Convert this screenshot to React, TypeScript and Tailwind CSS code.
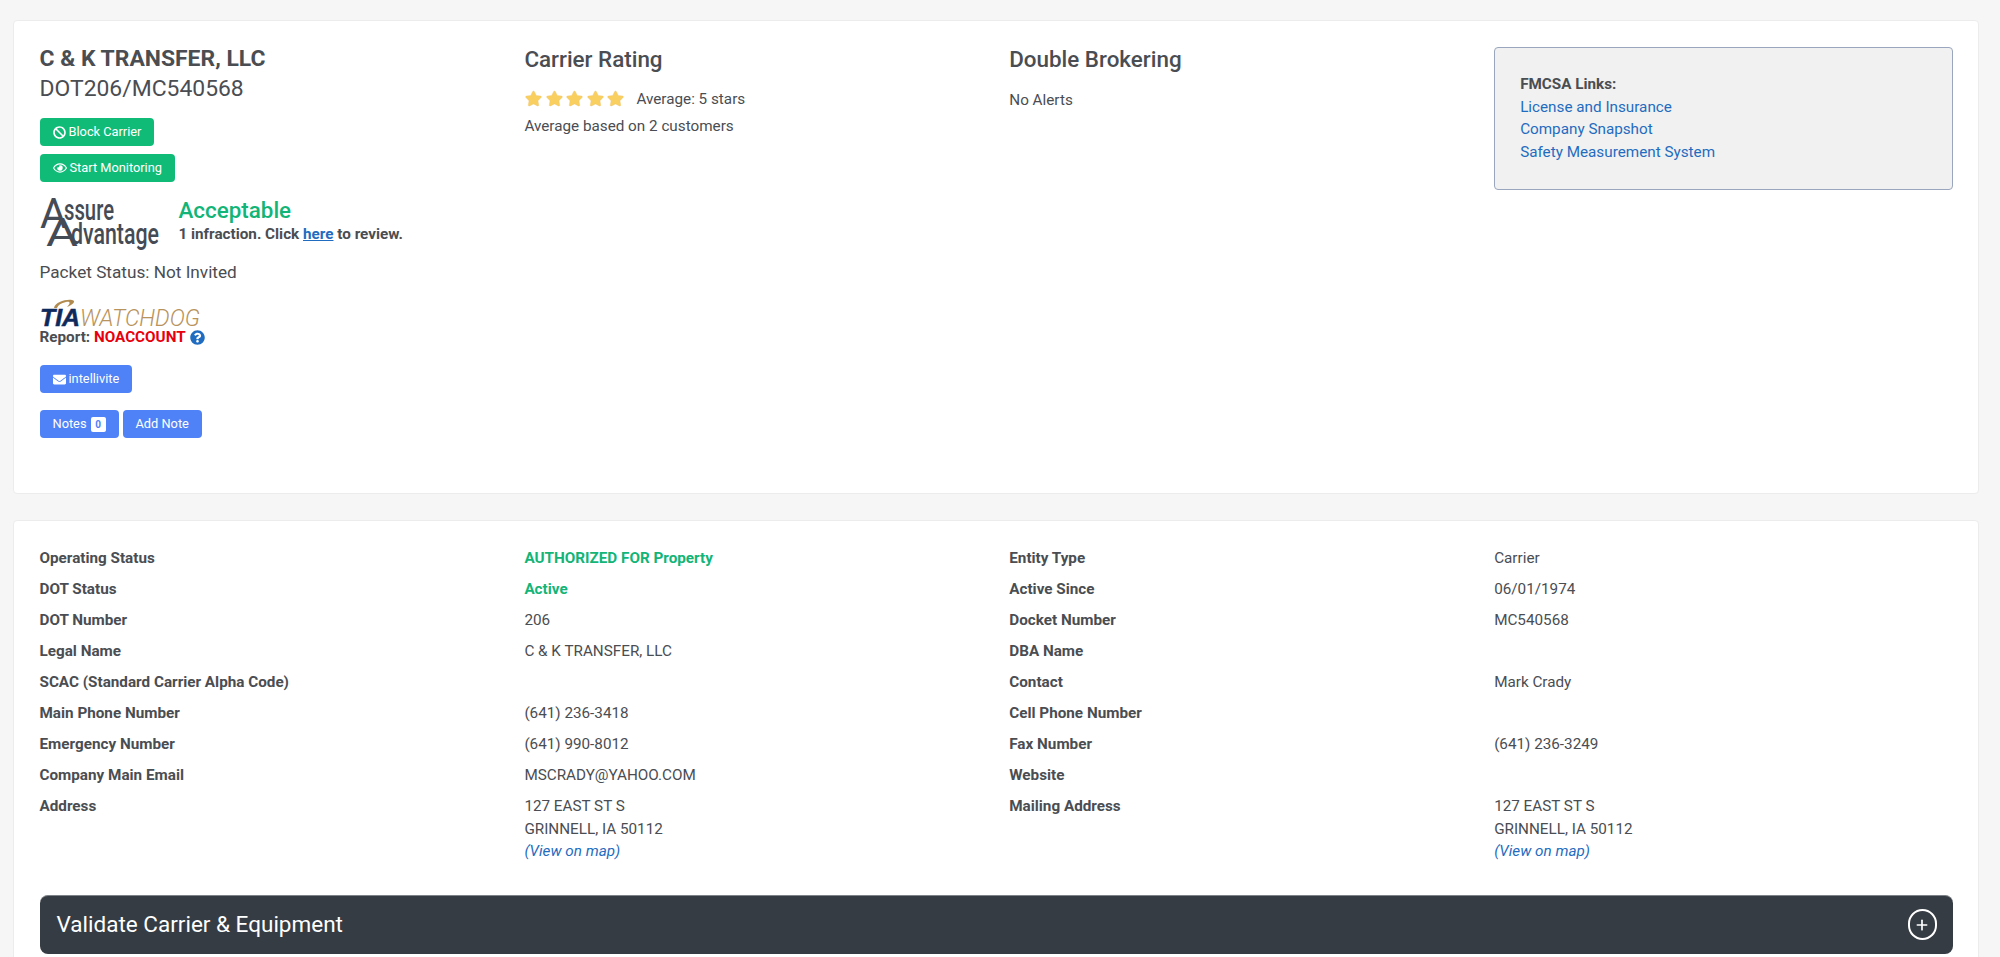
import { FaBan, FaEnvelope, FaQuestionCircle, FaRegEye, FaStar } from "react-icons/fa";
import { Plus } from "lucide-react";

const rows = [
  ["Operating Status", "AUTHORIZED FOR Property", "Entity Type", "Carrier"],
  ["DOT Status", "Active", "Active Since", "06/01/1974"],
  ["DOT Number", "206", "Docket Number", "MC540568"],
  ["Legal Name", "C & K TRANSFER, LLC", "DBA Name", ""],
  ["SCAC (Standard Carrier Alpha Code)", "", "Contact", "Mark Crady"],
  ["Main Phone Number", "(641) 236-3418", "Cell Phone Number", ""],
  ["Emergency Number", "(641) 990-8012", "Fax Number", "(641) 236-3249"],
  ["Company Main Email", "MSCRADY@YAHOO.COM", "Website", ""],
];

function Address() {
  return (
    <div className="leading-[22.5px]">
      <div>127 EAST ST S</div>
      <div>GRINNELL, IA 50112</div>
      <a className="italic text-[#1f6cc0]">(View on map)</a>
    </div>
  );
}

// logo lettering is real text, squeezed to the condensed shape of the original
function AssureLogo() {
  return (
    <svg width="120" height="52" viewBox="0 0 120 52" className="shrink-0 -mb-[4px] overflow-visible">
      <g fill="#454b55" fontFamily="Roboto, sans-serif">
        <text x="0" y="31" fontSize="42" fontWeight="400" textLength="27" lengthAdjust="spacingAndGlyphs">A</text>
        <text x="6" y="49" fontSize="38" fontWeight="400" textLength="32" lengthAdjust="spacingAndGlyphs">A</text>
        <text x="24" y="23" fontSize="30" fontWeight="500" textLength="50" lengthAdjust="spacingAndGlyphs">ssure</text>
        <text x="31" y="47" fontSize="30" fontWeight="500" textLength="88" lengthAdjust="spacingAndGlyphs">dvantage</text>
      </g>
    </svg>
  );
}

function TiaLogo() {
  return (
    <svg width="162" height="32" viewBox="0 0 162 32" className="block -mb-[4px]">
      <path d="M14 9 C15 3 26 0 32 1 C37 2 32 6 27 8 C31 4 30 2 26 3 C21 4 18 6 17 9 Z" fill="#b08a4e" />
      <text x="0" y="26.5" fontFamily="Liberation Sans, sans-serif" fontSize="23" fontWeight="700" fontStyle="italic" fill="#0e2a5c" stroke="#0e2a5c" strokeWidth="0.5" textLength="40" lengthAdjust="spacingAndGlyphs">TIA</text>
      <text x="40" y="26.5" fontFamily="Roboto, sans-serif" fontSize="23" fontWeight="300" fontStyle="italic" fill="#b8935c" textLength="120" lengthAdjust="spacingAndGlyphs">WATCHDOG</text>
    </svg>
  );
}

function Btn({ color, className = "", children }: { color: string; className?: string; children: React.ReactNode }) {
  return (
    <button className={`inline-flex items-center h-[28px] px-[13px] rounded-[4px] text-[12.8px] text-white ${color} ${className}`}>
      {children}
    </button>
  );
}

export default function App() {
  return (
    <div className="h-[957px] overflow-hidden bg-[#f6f6f6] pt-[20px] px-[13px] font-['Roboto',sans-serif] text-[15.25px] leading-[22.5px] text-[#4a4d52]">
      <div className="w-[1966px] h-[474px] bg-white border border-[#ececec] rounded-[4px] pt-[23px] px-[25.5px]">
        <div className="grid grid-cols-4 gap-x-[26.5px]">
          <div>
            <h1 className="text-[22.9px] leading-[30px] font-bold">C &amp; K TRANSFER, LLC</h1>
            <div className="text-[22.9px] leading-[30px]">DOT206/MC540568</div>
            <div className="mt-[14px] flex flex-col items-start gap-[8px]">
              <Btn color="bg-[#10bb78]"><FaBan className="mr-[3px] text-[13px]" />Block Carrier</Btn>
              <Btn color="bg-[#10bb78]"><FaRegEye className="mr-[3px] text-[14px]" />Start Monitoring</Btn>
            </div>
            <div className="mt-[15px] flex items-start">
              <AssureLogo />
              <div className="ml-[19px]">
                <div className="text-[22.4px] leading-[27px] font-medium text-[#12b577]">Acceptable</div>
                <div className="leading-[20px] font-bold">
                  1 infraction. Click <a className="underline text-[#1f6cc0]">here</a> to review.
                </div>
              </div>
            </div>
            <div className="mt-[14px] text-[17.2px] leading-[26px]">Packet Status: Not Invited</div>
            <div className="mt-[14px]"><TiaLogo /></div>
            <div className="flex items-center leading-[20px] font-bold">
              Report:&nbsp;<span className="text-[#e8000f]">NOACCOUNT</span>
              <FaQuestionCircle className="ml-[4px] text-[15px] text-[#1f6cc0]" />
            </div>
            <div className="mt-[18px]">
              <Btn color="bg-[#4f82f7]"><FaEnvelope className="mr-[3px] text-[13px]" />intellivite</Btn>
            </div>
            <div className="mt-[17px] flex gap-[4px]">
              <Btn color="bg-[#4f82f7]">
                Notes
                <span className="ml-[4px] w-[15px] h-[15px] rounded-[2px] bg-white text-[#4f82f7] text-[10px] font-bold leading-[15px] text-center">0</span>
              </Btn>
              <Btn color="bg-[#4f82f7]">Add Note</Btn>
            </div>
          </div>
          <div>
            <h2 className="text-[22.4px] leading-[30px] font-medium">Carrier Rating</h2>
            <div className="mt-[15px] flex items-center h-[20px]">
              <div className="ml-[1px] mb-[2px] flex gap-[3.5px]">
                {[0, 1, 2, 3, 4].map((i) => (
                  <FaStar key={i} className="w-[17px] h-[17px] text-[#f9cf60] stroke-[#e9bd72] stroke-[10px]" />
                ))}
              </div>
              <span className="ml-[12px]">Average: 5 stars</span>
            </div>
            <div className="mt-[6px]">Average based on 2 customers</div>
          </div>
          <div>
            <h2 className="text-[22.4px] leading-[30px] font-medium">Double Brokering</h2>
            <div className="mt-[15px]">No Alerts</div>
          </div>
          <div className="mt-[3px] h-[143px] bg-[#f1f1f1] border border-[#9aa6bd] rounded-[4px] pt-[25px] px-[25px]">
            <div className="font-bold">FMCSA Links:</div>
            <a className="block text-[#1f6cc0]">License and Insurance</a>
            <a className="block text-[#1f6cc0]">Company Snapshot</a>
            <a className="block text-[#1f6cc0]">Safety Measurement System</a>
          </div>
        </div>
      </div>

      <div className="mt-[26px] w-[1966px] h-[480px] bg-white border border-[#ececec] rounded-[4px] pt-[26px] px-[25.5px]">
        <div className="grid grid-cols-4 gap-x-[26.5px]">
          {rows.map((r) => (
            <div key={r[0]} className="contents">
              <div className="font-bold h-[31px]">{r[0]}</div>
              <div className={r[0] === "Operating Status" || r[0] === "DOT Status" ? "font-bold text-[#12b577]" : ""}>{r[1]}</div>
              <div className="font-bold">{r[2]}</div>
              <div>{r[3]}</div>
            </div>
          ))}
          <div className="font-bold">Address</div>
          <Address />
          <div className="font-bold">Mailing Address</div>
          <Address />
        </div>
        <div className="mt-[32px] h-[59px] bg-[#363c43] border-t border-[#7d8288] rounded-[8px] flex items-center justify-between pl-[17px] pr-[16px] text-white">
          <span className="text-[22.5px]">Validate Carrier &amp; Equipment</span>
          <span className="w-[29px] h-[31px] rounded-full border-2 border-white flex items-center justify-center">
            <Plus size={16} strokeWidth={2.5} />
          </span>
        </div>
      </div>
    </div>
  );
}
